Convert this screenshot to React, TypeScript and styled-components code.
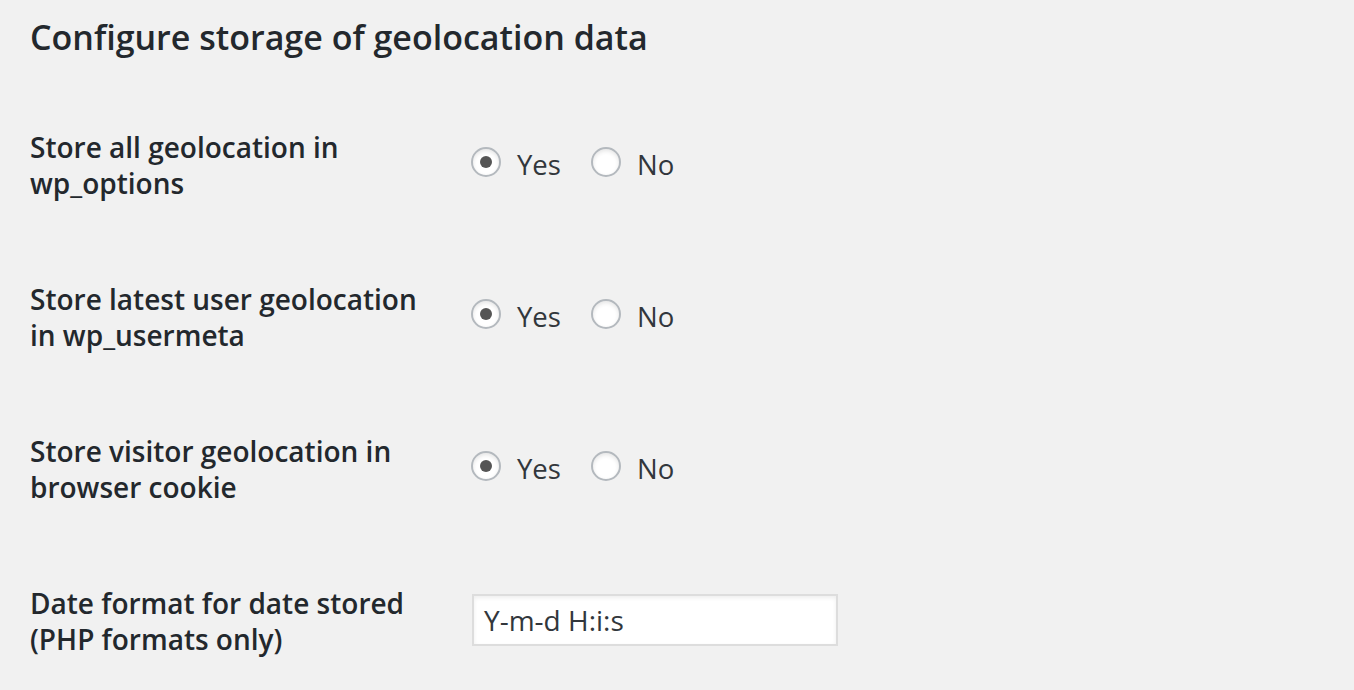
import React from "react";
import styled, { createGlobalStyle } from "styled-components";

const Global = createGlobalStyle`
  html, body { margin: 0; padding: 0; background: #f1f1f1; }
  body { font-family: "Open Sans", "Liberation Sans", sans-serif; color: #23282d; }
`;

const Page = styled.div`
  padding: 0 30px;
  width: 1354px;
  height: 690px;
  box-sizing: border-box;
  overflow: hidden;
`;

const Title = styled.h2`
  margin: 0;
  padding-top: 14px;
  font-size: 34px;
  line-height: 46px;
  font-weight: 600;
  color: #23282d;
`;

const Rows = styled.div`
  margin-top: 29px;
  display: flex;
  flex-direction: column;
`;

const Row = styled.div`
  display: grid;
  grid-template-columns: 420px 1fr;
  height: 152px;
`;

const Label = styled.div`
  padding-top: 40px;
  font-size: 28px;
  line-height: 36px;
  font-weight: 600;
  color: #23282d;
  width: 400px;
`;

const Field = styled.div<{ $top: number; $left: number }>`
  padding-top: ${(p) => p.$top}px;
  padding-left: ${(p) => p.$left}px;
  display: flex;
  align-items: flex-start;
`;

const Option = styled.label`
  display: flex;
  align-items: flex-start;
  gap: 16px;
  margin-right: 30px;
  font-size: 27.5px;
  line-height: 36px;
  color: #32373c;
`;

const Radio = styled.span<{ $checked?: boolean }>`
  width: 30px;
  height: 30px;
  box-sizing: border-box;
  border-radius: 50%;
  border: 2px solid #b4b9be;
  background: #fff;
  box-shadow: inset 0 2px 4px rgba(0, 0, 0, 0.1);
  display: flex;
  align-items: center;
  justify-content: center;
  &::after {
    content: "";
    display: ${(p) => (p.$checked ? "block" : "none")};
    width: 12px;
    height: 12px;
    border-radius: 50%;
    background: #555;
  }
`;

const TextInput = styled.div`
  width: 366px;
  height: 52px;
  box-sizing: border-box;
  border: 2px solid #ddd;
  background: #fff;
  box-shadow: inset 0 2px 4px rgba(0, 0, 0, 0.07);
  padding: 0 10px;
  display: flex;
  align-items: center;
  font-size: 28px;
  color: #32373c;
`;

const rows = [
  ["Store all geolocation in", "wp_options"],
  ["Store latest user geolocation", "in wp_usermeta"],
  ["Store visitor geolocation in", "browser cookie"],
];

export default function App() {
  return (
    <Page>
      <Global />
      <Title>Configure storage of geolocation data</Title>
      <Rows>
        {rows.map(([a, b]) => (
          <Row key={a}>
            <Label>
              {a}
              <br />
              {b}
            </Label>
            <Field $top={58} $left={21}>
              <Option>
                <Radio $checked />
                Yes
              </Option>
              <Option>
                <Radio />
                No
              </Option>
            </Field>
          </Row>
        ))}
        <Row>
          <Label>
            Date format for date stored
            <br />
            (PHP formats only)
          </Label>
          <Field $top={49} $left={22}>
            <TextInput>Y-m-d H:i:s</TextInput>
          </Field>
        </Row>
      </Rows>
    </Page>
  );
}
